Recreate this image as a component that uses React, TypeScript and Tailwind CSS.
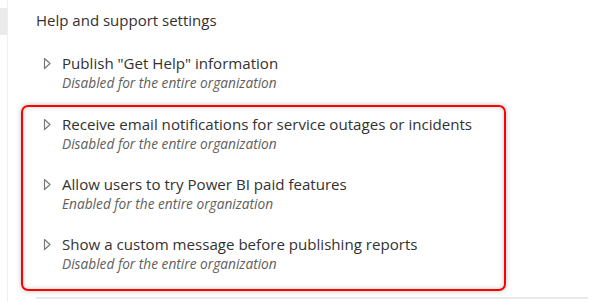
const items = [
  { title: 'Publish "Get Help" information', status: "Disabled for the entire organization" },
  { title: "Receive email notifications for service outages or incidents", status: "Disabled for the entire organization" },
  { title: "Allow users to try Power BI paid features", status: "Enabled for the entire organization" },
  { title: "Show a custom message before publishing reports", status: "Disabled for the entire organization" },
];

function Caret() {
  return (
    <svg width="9" height="13" viewBox="0 0 9 13" className="mt-[5px] shrink-0">
      <path d="M1.5 1.5 L7 6.5 L1.5 11.5 Z" fill="none" stroke="#7a7876" strokeWidth="1.2" strokeLinejoin="round" />
    </svg>
  );
}

function Item({ title, status }: { title: string; status: string }) {
  return (
    <div className="flex gap-[10px] h-[60px]">
      <Caret />
      <div className="flex flex-col">
        <span className="text-[15.1px] leading-[22px] text-[#323130]">{title}</span>
        <span className="text-[13.7px] leading-[18px] italic text-[#605e5c]">{status}</span>
      </div>
    </div>
  );
}

export default function App() {
  return (
    <div className="w-[597px] h-[302px] bg-white flex overflow-hidden" style={{ fontFamily: '"Open Sans", sans-serif' }}>
      {/* left rail */}
      <div className="w-[8px] shrink-0 flex flex-col border-r border-[#efefef]">
        <div className="mt-[8px] h-[27px] bg-[#ebebeb]" />
      </div>

      <div className="flex-1 flex flex-col">
        <h2 className="ml-[28px] mt-[8px] text-[15px] leading-[24px] text-[#323130]">Help and support settings</h2>

        <div className="ml-[35px] mt-[20px]">
          <Item {...items[0]} />
        </div>

        <div className="ml-[13px] mt-[-7px] w-[485px] h-[186px] rounded-[7px] border-2 border-[#f00] shadow-[0_0_5px_rgba(0,0,0,0.25),inset_0_0_5px_rgba(0,0,0,0.2)] pl-[20px] pt-[6px]">
          {items.slice(1).map((it) => (
            <Item key={it.title} {...it} />
          ))}
        </div>

        <div className="ml-[28px] mt-[6px] w-[552px] h-[2px] bg-[#ebebeb]" />
      </div>
    </div>
  );
}
